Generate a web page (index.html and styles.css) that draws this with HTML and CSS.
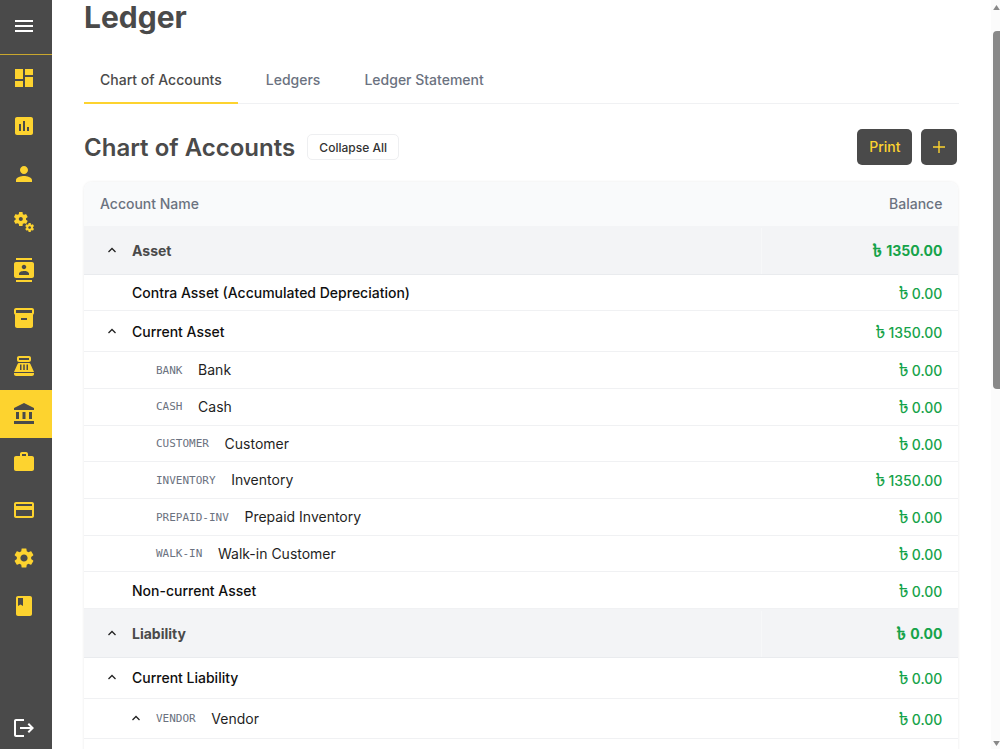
FILE: index.html
```html
<!DOCTYPE html>
<html lang="en">
<head>
<meta charset="utf-8">
<title>Ledger</title>
<link rel="stylesheet" href="styles.css">
</head>
<body>
<div class="app">
  <nav class="sidebar">
    <div class="menu-toggle"><svg class="icon" viewBox="0 0 24 24"><path d="M3 18h18v-2H3v2zm0-5h18v-2H3v2zm0-7v2h18V6H3z"/></svg></div>
    <a class="nav-item"><svg class="icon" viewBox="0 0 24 24"><path d="M3 13h8V3H3v10zm0 8h8v-6H3v6zm10 0h8V11h-8v10zm0-18v6h8V3h-8z"/></svg></a>
    <a class="nav-item"><svg class="icon" viewBox="0 0 24 24"><path d="M19 3H5c-1.1 0-2 .9-2 2v14c0 1.100.9 2 2 2h14c1.100 0 2-.9 2-2V5c0-1.100-.9-2-2-2zM9 17H7v-7h2v7zm4 0h-2V7h2v10zm4 0h-2v-4h2v4z"/></svg></a>
    <a class="nav-item"><svg class="icon" viewBox="0 0 24 24"><path d="M12 12c2.210 0 4-1.790 4-4s-1.790-4-4-4-4 1.790-4 4 1.790 4 4 4zm0 2c-2.670 0-8 1.340-8 4v2h16v-2c0-2.660-5.330-4-8-4z"/></svg></a>
    <a class="nav-item"><svg class="icon" viewBox="0 0 24 24"><path d="M14.17,13.71l1.4-2.42c0.09-0.15,0.05-0.34-0.08-0.45l-1.48-1.16c0.03-0.22,0.05-0.45,0.05-0.68s-0.02-0.46-0.05-0.69l1.48-1.16c0.13-0.11,0.17-0.3,0.08-0.45l-1.4-2.42c-0.09-0.15-0.27-0.21-0.43-0.15L12,4.83c-0.36-0.28-0.75-0.51-1.18-0.69l-0.26-1.85C10.53,2.13,10.38,2,10.21,2h-2.8C7.24,2,7.09,2.13,7.06,2.3L6.8,4.15C6.38,4.33,5.98,4.56,5.62,4.84l-1.74-0.7c-0.16-0.06-0.34,0-0.43,0.15l-1.4,2.42C1.96,6.86,2,7.05,2.13,7.16l1.48,1.16C3.58,8.54,3.56,8.77,3.56,9s0.02,0.46,0.05,0.69l-1.48,1.16C2,10.96,1.96,11.15,2.05,11.3l1.4,2.42c0.09,0.15,0.27,0.21,0.43,0.15l1.74-0.7c0.36,0.28,0.75,0.51,1.18,0.69l0.26,1.85C7.09,15.87,7.24,16,7.41,16h2.8c0.17,0,0.32-0.13,0.35-0.3l0.26-1.85c0.42-0.18,0.82-0.41,1.18-0.69l1.74,0.7C13.9,13.92,14.08,13.86,14.17,13.71z M8.81,11c-1.1,0-2-0.9-2-2c0-1.1,0.9-2,2-2s2,0.9,2,2C10.81,10.1,9.91,11,8.81,11z"/><path d="M21.92,18.67l-0.96-0.74c0.02-0.14,0.04-0.29,0.04-0.44c0-0.15-0.01-0.3-0.04-0.44l0.95-0.74c0.08-0.07,0.11-0.19,0.05-0.29l-0.9-1.55c-0.05-0.1-0.17-0.13-0.28-0.1l-1.11,0.45c-0.23-0.18-0.48-0.33-0.76-0.44l-0.17-1.18C18.73,13.08,18.63,13,18.53,13h-1.79c-0.11,0-0.21,0.08-0.22,0.19l-0.17,1.18c-0.27,0.12-0.53,0.26-0.76,0.44l-1.11-0.45c-0.1-0.04-0.22,0-0.28,0.1l-0.9,1.55c-0.05,0.1-0.04,0.22,0.05,0.29l0.95,0.74c-0.02,0.14-0.03,0.29-0.03,0.44c0,0.15,0.01,0.3,0.03,0.44l-0.95,0.74c-0.08,0.07-0.11,0.19-0.05,0.29l0.9,1.55c0.05,0.1,0.17,0.13,0.28,0.1l1.11-0.45c0.23,0.18,0.48,0.33,0.76,0.44l0.17,1.18c0.02,0.11,0.11,0.19,0.22,0.19h1.79c0.11,0,0.21-0.08,0.22-0.19l0.17-1.18c0.27-0.12,0.53-0.26,0.75-0.44l1.12,0.45c0.1,0.04,0.22,0,0.28-0.1l0.9-1.55C22.03,18.86,22,18.74,21.92,18.67z M17.63,18.83c-0.74,0-1.35-0.6-1.35-1.35s0.6-1.35,1.35-1.35s1.35,0.6,1.35,1.35S18.37,18.83,17.63,18.83z"/></svg></a>
    <a class="nav-item"><svg class="icon" viewBox="0 0 24 24"><path d="M20 0H4v2h16V0zM4 24h16v-2H4v2zM20 4H4c-1.100 0-2 .9-2 2v12c0 1.100.9 2 2 2h16c1.100 0 2-.9 2-2V6c0-1.100-.9-2-2-2zm-8 2.750c1.240 0 2.250 1.010 2.250 2.250s-1.010 2.250-2.250 2.250S9.750 10.240 9.750 9 10.760 6.750 12 6.750zM17 17H7v-1.500c0-1.670 3.330-2.500 5-2.500s5 .83 5 2.500V17z"/></svg></a>
    <a class="nav-item"><svg class="icon" viewBox="0 0 24 24"><path d="M20 2H4c-1 0-2 .9-2 2v3.010c0 .72.43 1.340 1 1.690V20c0 1.100 1.100 2 2 2h14c.9 0 2-.9 2-2V8.700c.57-.35 1-.97 1-1.690V4c0-1.100-1-2-2-2zm-5 12H9v-2h6v2zm5-7H4V4h16v3z"/></svg></a>
    <a class="nav-item"><svg class="icon" viewBox="0 0 24 24"><path fill-rule="evenodd" d="M17 2H7c-1.100 0-2 .9-2 2v2c0 1.100.9 2 2 2h10c1.100 0 2-.9 2-2V4c0-1.100-.9-2-2-2zm0 4H7V4h10v2zM20 22H4c-1.100 0-2-.9-2-2v-1h20v1c0 1.100-.9 2-2 2zM18.530 10.190C18.210 9.470 17.490 9 16.700 9H7.300c-.79 0-1.510.47-1.830 1.190L2 18h20l-3.470-7.810zM8 10.500h1.500V16H8zM11.250 10.500h1.500V16h-1.500zM14.500 10.500H16V16h-1.500z"/></svg></a>
    <a class="nav-item active"><svg class="icon" viewBox="0 0 24 24"><path d="M4 10h3v7H4zM10.500 10h3v7h-3zM2 19h20v3H2zM17 10h3v7h-3zM12 1 2 6v2h20V6z"/></svg></a>
    <a class="nav-item"><svg class="icon" viewBox="0 0 24 24"><path d="M20 6h-4V4c0-1.110-.89-2-2-2h-4c-1.110 0-2 .89-2 2v2H4c-1.110 0-1.990.89-1.990 2L2 19c0 1.110.89 2 2 2h16c1.110 0 2-.89 2-2V8c0-1.110-.89-2-2-2zm-6 0h-4V4h4v2z"/></svg></a>
    <a class="nav-item"><svg class="icon" viewBox="0 0 24 24"><path d="M20 4H4c-1.110 0-1.990.89-1.990 2L2 18c0 1.110.89 2 2 2h16c1.110 0 2-.89 2-2V6c0-1.110-.89-2-2-2zm0 14H4v-6h16v6zm0-10H4V6h16v2z"/></svg></a>
    <a class="nav-item"><svg class="icon" viewBox="0 0 24 24"><path d="M19.14 12.94c.04-.3.06-.61.06-.94 0-.32-.02-.64-.07-.94l2.03-1.58c.18-.14.23-.41.12-.61l-1.92-3.32c-.12-.22-.37-.29-.59-.22l-2.39.96c-.5-.38-1.03-.7-1.62-.94l-.36-2.54c-.04-.24-.24-.41-.48-.41h-3.84c-.24 0-.43.17-.47.41l-.36 2.54c-.59.24-1.13.57-1.62.94l-2.39-.96c-.22-.08-.47 0-.59.22L2.74 8.870c-.12.21-.08.47.12.61l2.030 1.580c-.05.3-.09.63-.09.94s.02.64.07.94l-2.030 1.580c-.18.14-.23.41-.12.61l1.920 3.320c.12.22.37.29.59.22l2.390-.96c.5.38 1.030.7 1.620.94l.36 2.540c.05.24.24.41.48.41h3.840c.24 0 .44-.17.47-.41l.36-2.540c.59-.24 1.130-.56 1.620-.94l2.390.96c.22.08.47 0 .59-.22l1.920-3.320c.12-.22.07-.47-.12-.61l-2.010-1.580zM12 15.600c-1.980 0-3.600-1.620-3.600-3.600s1.620-3.600 3.600-3.600 3.600 1.620 3.600 3.600-1.620 3.600-3.600 3.600z"/></svg></a>
    <a class="nav-item"><svg class="icon" viewBox="0 0 24 24"><path d="M18 2H6c-1.100 0-2 .9-2 2v16c0 1.100.9 2 2 2h12c1.100 0 2-.9 2-2V4c0-1.100-.9-2-2-2zM6 4h5v8l-2.500-1.500L6 12V4z"/></svg></a>
    <a class="logout"><svg class="icon" viewBox="0 0 24 24"><path d="m17 7-1.410 1.410L18.170 11H8v2h10.170l-2.580 2.580L17 17l5-5zM4 5h8V3H4c-1.100 0-2 .9-2 2v14c0 1.100.9 2 2 2h8v-2H4z"/></svg></a>
  </nav>

  <main class="content">
    <h1 class="page-title">Ledger</h1>
    <div class="tabs">
      <a class="tab selected">Chart of Accounts</a>
      <a class="tab">Ledgers</a>
      <a class="tab">Ledger Statement</a>
    </div>
    <div class="toolbar">
      <h2 class="section-title">Chart of Accounts</h2>
      <button class="btn-outline">Collapse All</button>
      <div class="actions">
        <button class="btn-dark">Print</button>
        <button class="btn-dark add"><svg class="plus" viewBox="0 0 14 14"><path d="M7 1v12M1 7h12"/></svg></button>
      </div>
    </div>
    <div class="table">
      <div class="row head"><span>Account Name</span><span>Balance</span></div>
      <div class="row group"><svg class="chev" viewBox="0 0 8 6"><path d="M.5 5 4 1.500 7.500 5"/></svg><span class="name">Asset</span><span class="amount"><span class="taka">৳</span>1350.00</span></div>
      <div class="row sub"><span class="name">Contra Asset (Accumulated Depreciation)</span><span class="amount"><span class="taka">৳</span>0.00</span></div>
      <div class="row sub parent"><svg class="chev" viewBox="0 0 8 6"><path d="M.5 5 4 1.500 7.500 5"/></svg><span class="name">Current Asset</span><span class="amount"><span class="taka">৳</span>1350.00</span></div>
      <div class="row leaf"><span class="code">BANK</span><span class="name">Bank</span><span class="amount"><span class="taka">৳</span>0.00</span></div>
      <div class="row leaf"><span class="code">CASH</span><span class="name">Cash</span><span class="amount"><span class="taka">৳</span>0.00</span></div>
      <div class="row leaf"><span class="code">CUSTOMER</span><span class="name">Customer</span><span class="amount"><span class="taka">৳</span>0.00</span></div>
      <div class="row leaf"><span class="code">INVENTORY</span><span class="name">Inventory</span><span class="amount"><span class="taka">৳</span>1350.00</span></div>
      <div class="row leaf"><span class="code">PREPAID-INV</span><span class="name">Prepaid Inventory</span><span class="amount"><span class="taka">৳</span>0.00</span></div>
      <div class="row leaf"><span class="code">WALK-IN</span><span class="name">Walk-in Customer</span><span class="amount"><span class="taka">৳</span>0.00</span></div>
      <div class="row sub"><span class="name">Non-current Asset</span><span class="amount"><span class="taka">৳</span>0.00</span></div>
      <div class="row group"><svg class="chev" viewBox="0 0 8 6"><path d="M.5 5 4 1.500 7.500 5"/></svg><span class="name">Liability</span><span class="amount"><span class="taka">৳</span>0.00</span></div>
      <div class="row sub parent"><svg class="chev" viewBox="0 0 8 6"><path d="M.5 5 4 1.500 7.500 5"/></svg><span class="name">Current Liability</span><span class="amount"><span class="taka">৳</span>0.00</span></div>
      <div class="row leaf parent"><svg class="chev" viewBox="0 0 8 6"><path d="M.5 5 4 1.500 7.500 5"/></svg><span class="code">VENDOR</span><span class="name">Vendor</span><span class="amount"><span class="taka">৳</span>0.00</span></div>
      <div class="row leaf"></div>
    </div>
  </main>

  <div class="scrollbar">
    <svg class="arrow" viewBox="0 0 8 6"><path d="M0 6 4 0l4 6z"/></svg>
    <div class="thumb"></div>
    <svg class="arrow down" viewBox="0 0 8 6"><path d="M0 0h8L4 6z"/></svg>
  </div>
</div>
</body>
</html>
```

FILE: styles.css
```css
* { box-sizing: border-box; }
body { margin: 0; font-family: Inter, "Noto Sans Bengali", sans-serif; font-size: 14px; color: #1f1f1f; background: #fff; overflow: hidden; }
.app { display: flex; width: 1000px; height: 749px; overflow: hidden; }

.sidebar { display: flex; flex-direction: column; width: 52px; flex: none; background: #4a4a4a; color: #fdd32f; }
.icon { width: 24px; height: 24px; display: block; fill: currentColor; }
.menu-toggle { height: 54px; flex: none; padding: 14px 12px 0; color: #fff; box-shadow: 0 1px 0 #c9a72e; }
.nav-item { height: 48px; padding: 12px; padding-top: 12.4px; }
.nav-item.active { background: #fdd32f; color: #4a4a4a; }
.logout { margin-top: auto; padding: 0 12px 9px; color: #fff; }

.content { flex: 1; min-width: 0; padding: 0 32px; }
.page-title { margin: 0; height: 56px; font-size: 30px; line-height: 34px; font-weight: 700; color: #4a4a4a; }
.tabs { display: flex; gap: 12px; height: 48px; width: 875px; border-bottom: 1px solid #f0f1f3; }
.tab { height: 48px; padding: 14px 16px 0; line-height: 20px; font-weight: 500; color: #6b7280; }
.tab.selected { color: #4a4a4a; border-bottom: 2px solid #fdd32f; }
.toolbar { display: flex; align-items: center; height: 78px; padding-top: 8px; width: 873.4px; }
.section-title { margin: 0 12px 0 0; padding-top: 1px; font-size: 24px; line-height: 32px; font-weight: 600; color: #4a4a4a; }
.btn-outline { height: 26px; width: 92px; padding: 1px 0 0; border: 1px solid #eeeff1; border-radius: 5px; background: #fff; font: 500 12px/16px Inter, sans-serif; color: #333; }
.actions { display: flex; gap: 9px; margin-left: auto; }
.btn-dark { width: 55px; height: 36px; padding: 0; border: 0; border-radius: 5px; background: #4a4a4a; color: #fdd32f; font: 500 14px/20px Inter, sans-serif; }
.btn-dark.add { width: 36px; display: flex; align-items: center; justify-content: center; }
.plus { width: 14px; height: 14px; fill: none; stroke: currentColor; stroke-width: 1.4; }

.table { width: 874.4px; border-radius: 8px 8px 0 0; box-shadow: 0 0 3px rgba(0, 0, 0, .09); overflow: hidden; }
.row { display: flex; align-items: center; height: 36.72px; padding: .6px 16px 0 48px; border-bottom: 1px solid #f0f1f3; line-height: 20px; }
.row.head { height: 44px; padding: 0 16px; justify-content: space-between; background: #f9fafb; color: #6b7280; font-weight: 500; border-bottom: 0; }
.row.group { height: 48.6px; padding-top: 1.6px; padding-left: 24px; background: #f3f4f6; border-color: #e9ebee; color: #4a4a4a; font-weight: 700; }
.row.sub { font-weight: 500; color: #0f0f0f; }
.row.parent { height: 40.8px; padding-left: 24px; }
.row.leaf { padding-left: 72px; }
.row.leaf.parent { padding-left: 48px; }
.chev { width: 8px; height: 6px; margin: 0 16px 2px 0; fill: none; stroke: #222; stroke-width: 1.3; }
.code { margin-right: 15.6px; padding-top: 1px; font: 11px/16px "DejaVu Sans Mono", monospace; color: #6b7280; }
.amount { display: flex; align-items: baseline; justify-content: flex-end; height: 20px; margin-left: auto; color: #16a34a; font-weight: 500; }
.group .amount { width: 181px; height: auto; align-self: stretch; align-items: center; border-left: 1px solid #f7f8f9; font-weight: 700; }
.taka { margin-right: 3px; font-size: 18px; line-height: 20px; font-weight: 400; }
.group .taka { margin-right: 4px; font-size: 17px; font-weight: 600; }

.scrollbar { display: flex; flex-direction: column; align-items: flex-end; width: 9px; flex: none; padding: 5px 0 3px; background: #fbfbfb; }
.arrow { width: 7px; height: 5px; fill: #888; }
.thumb { width: 7px; height: 358px; margin-top: 21px; border-radius: 4px 0 0 4px; background: #888; }
.arrow.down { margin-top: auto; }
```
